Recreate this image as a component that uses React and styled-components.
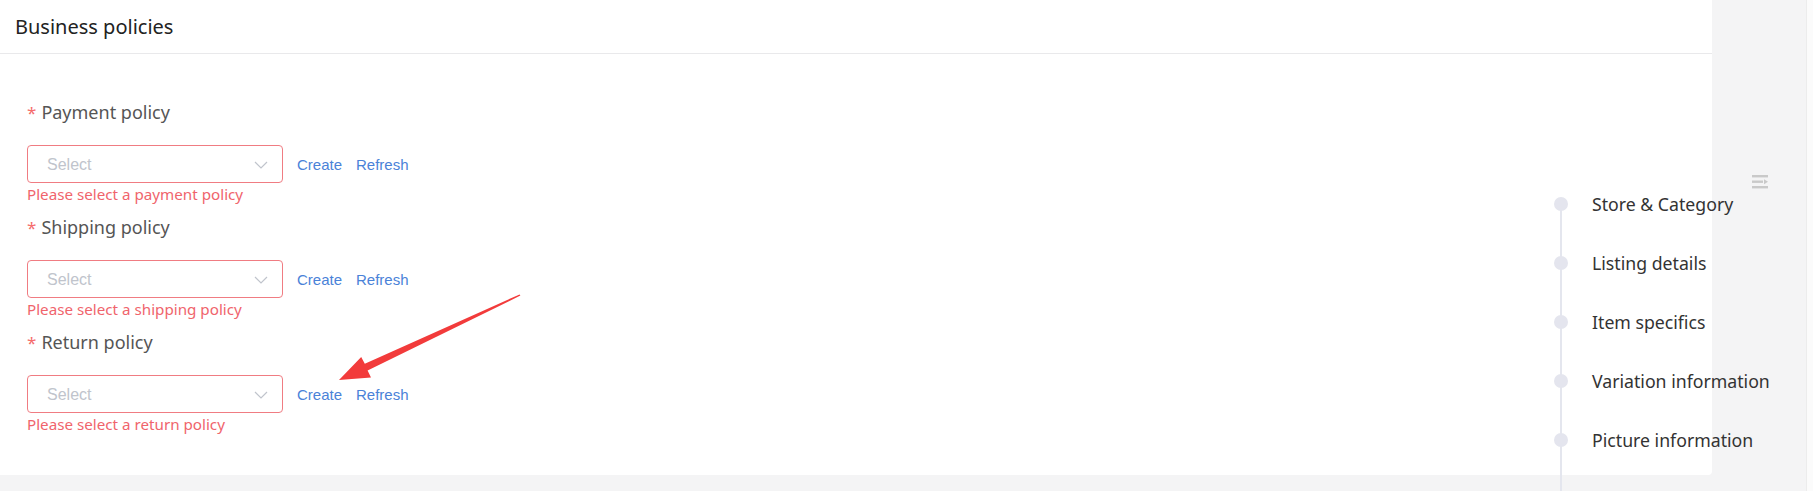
import React from "react";
import styled, { createGlobalStyle } from "styled-components";

const GlobalStyle = createGlobalStyle`
  html, body {
    margin: 0;
    padding: 0;
    background: #f4f4f5;
    overflow: hidden;
  }
  body {
    font-family: "Noto Sans", "Liberation Sans", sans-serif;
  }
`;

const Page = styled.div`
  position: relative;
  display: flex;
  height: 491px;
  background: #f4f4f5;
`;

const Panel = styled.section`
  width: 1712px;
  height: 475px;
  background: #fff;
  border-bottom-right-radius: 4px;
  display: flex;
  flex-direction: column;
`;

const Gutter = styled.aside`
  flex: 1;
  display: flex;
  justify-content: flex-end;
`;

const ScrollTrack = styled.div`
  width: 6px;
  background: #fbfbfb;
  border-left: 1px solid #ececec;
`;

const Header = styled.header`
  height: 53px;
  display: flex;
  align-items: center;
  padding: 0 15px;
  border-bottom: 1px solid #e9e9eb;
  font-size: 20px;
  color: #222;
`;

const Form = styled.div`
  padding: 38px 27px 0;
  display: flex;
  flex-direction: column;
  gap: 3px;
`;

const Item = styled.div`
  display: flex;
  flex-direction: column;
`;

const Label = styled.label`
  height: 40px;
  line-height: 40px;
  margin-bottom: 13px;
  font-size: 18px;
  color: #555;

  &::before {
    content: "*";
    color: #f56c6c;
    margin-right: 5px;
    font-size: 17px;
  }
`;

const Row = styled.div`
  display: flex;
  align-items: center;
  gap: 14px;
`;

const SelectBox = styled.div`
  box-sizing: border-box;
  width: 256px;
  height: 38px;
  border: 1px solid ${p => (p.$invalid ? "#f07c82" : "#dcdfe6")};
  border-radius: 4px;
  display: flex;
  align-items: center;
  justify-content: space-between;
  padding: 1px 14px 0 19px;
  font-family: "Liberation Sans", Arial, sans-serif;
  font-size: 16px;
  color: #c0c4cc;
`;

const LinkButton = styled.button`
  border: 0;
  background: none;
  padding: 0;
  font-family: "Liberation Sans", Arial, sans-serif;
  font-size: 15px;
  color: #4a82d8;
  cursor: pointer;
`;

const ErrorText = styled.div`
  margin-top: 1px;
  line-height: 20px;
  font-size: 15.2px;
  color: #f0646c;
`;

const Anchor = styled.nav`
  position: absolute;
  left: 1554px;
  top: 190px;
  display: flex;
  flex-direction: column;
  gap: 32px;

  &::before {
    content: "";
    position: absolute;
    left: 6px;
    top: 14px;
    bottom: -80px;
    width: 2px;
    background: #e4e6ee;
  }
`;

const AnchorItem = styled.a`
  position: relative;
  display: flex;
  align-items: center;
  gap: 24px;
  height: 27px;
  font-size: 17.7px;
  color: #333;
  text-decoration: none;

  &::before {
    content: "";
    width: 14px;
    height: 14px;
    border-radius: 50%;
    background: #e4e5ee;
    flex: none;
  }
`;

const MenuToggle = styled.div`
  position: absolute;
  left: 1752px;
  top: 172px;
`;

const Annotation = styled.svg`
  position: absolute;
  left: 0;
  top: 0;
  pointer-events: none;
`;

const Chevron = () => (
  <svg width="14" height="8" viewBox="0 0 14 8">
    <path d="M1 1l6 6 6-6" fill="none" stroke="#c0c4cc" strokeWidth="1.2" />
  </svg>
);

const policies = [
  { label: "Payment policy", error: "Please select a payment policy" },
  { label: "Shipping policy", error: "Please select a shipping policy" },
  { label: "Return policy", error: "Please select a return policy" },
];

const sections = [
  "Store & Category",
  "Listing details",
  "Item specifics",
  "Variation information",
  "Picture information",
];

const PolicyField = ({ label, error }) => (
  <Item>
    <Label>{label}</Label>
    <Row>
      <SelectBox $invalid>
        <span>Select</span>
        <Chevron />
      </SelectBox>
      <LinkButton>Create</LinkButton>
      <LinkButton>Refresh</LinkButton>
    </Row>
    <ErrorText>{error}</ErrorText>
  </Item>
);

export default function App() {
  return (
    <>
      <GlobalStyle />
      <Page>
        <Panel>
          <Header>Business policies</Header>
          <Form>
            {policies.map(p => (
              <PolicyField key={p.label} {...p} />
            ))}
          </Form>
        </Panel>
        <Gutter>
          <ScrollTrack />
        </Gutter>

        <MenuToggle>
          <svg width="16" height="14" viewBox="0 0 16 14">
            <g fill="#c9c9c9">
              <rect x="0" y="0" width="16" height="2.4" />
              <rect x="0" y="5.5" width="11" height="2.4" />
              <path d="M12 4.2l4 2.5-4 2.5z" />
              <rect x="0" y="11" width="16" height="2.4" />
            </g>
          </svg>
        </MenuToggle>

        <Anchor>
          {sections.map(s => (
            <AnchorItem key={s}>{s}</AnchorItem>
          ))}
        </Anchor>

        <Annotation width="600" height="491">
          <polygon
            points="339,380 371,377.5 367.6,370.6 520.4,295.6 519.6,294.4 364.8,363.8 361.2,357"
            fill="#f23b3b"
          />
        </Annotation>
      </Page>
    </>
  );
}
